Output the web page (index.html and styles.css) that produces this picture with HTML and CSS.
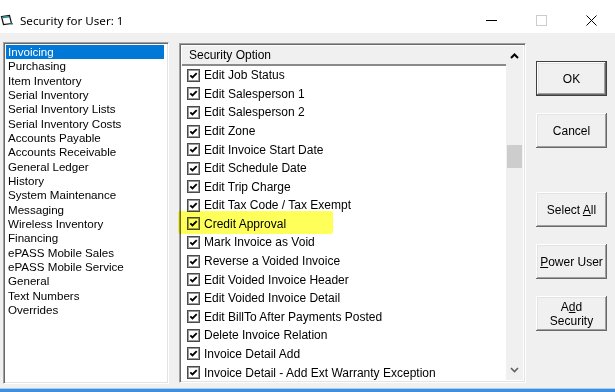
FILE: index.html
```html
<!DOCTYPE html>
<html lang="en">
<head>
    <meta charset="UTF-8">
    <meta name="viewport" content="width=device-width, initial-scale=1.0">
    <title>Security for User: 1</title>
    <link rel="stylesheet" href="styles.css">
</head>
<body>

    <!-- Title bar -->
    <div class="titlebar">
        <svg class="app-icon" width="14" height="12" viewBox="0 0 14 12">
            <path d="M1.5 2.5 L9.5 1.5 L11.5 9.5 L3.5 10.5 Z" fill="#fff" stroke="#111" stroke-width="1.2"/>
            <path d="M2.5 3.5 L9 2.8" stroke="#1b8a8a" stroke-width="1.4"/>
            <path d="M10.5 9.8 L13 9.8" stroke="#1b8a8a" stroke-width="1.4"/>
        </svg>
        <span class="title">Security for User: 1</span>
        <div class="controls">
            <span class="ctl"><svg width="11" height="11" viewBox="0 0 11 11"><path d="M0 5.5 H11" stroke="#000" stroke-width="1"/></svg></span>
            <span class="ctl"><svg width="11" height="11" viewBox="0 0 11 11"><rect x="0.5" y="0.5" width="10" height="10" fill="none" stroke="#cccccc" stroke-width="1"/></svg></span>
            <span class="ctl"><svg width="11" height="11" viewBox="0 0 11 11"><path d="M0.5 0.5 L10.5 10.5 M10.5 0.5 L0.5 10.5" stroke="#000" stroke-width="1"/></svg></span>
        </div>
    </div>

    <div class="dialog">
        <!-- Category list -->
        <ul class="categories">
            <li class="selected">Invoicing</li>
            <li>Purchasing</li>
            <li>Item Inventory</li>
            <li>Serial Inventory</li>
            <li>Serial Inventory Lists</li>
            <li>Serial Inventory Costs</li>
            <li>Accounts Payable</li>
            <li>Accounts Receivable</li>
            <li>General Ledger</li>
            <li>History</li>
            <li>System Maintenance</li>
            <li>Messaging</li>
            <li>Wireless Inventory</li>
            <li>Financing</li>
            <li>ePASS Mobile Sales</li>
            <li>ePASS Mobile Service</li>
            <li>General</li>
            <li>Text Numbers</li>
            <li>Overrides</li>
        </ul>

        <!-- Security options list -->
        <div class="options">
            <div class="options-main">
                <div class="options-header">Security Option</div>
                <ul class="option-rows" id="optionRows"></ul>
            </div>
            <div class="scrollbar">
                <div class="arrow">
                    <svg width="9" height="6" viewBox="0 0 9 6"><path d="M1 5 L4.5 1.5 L8 5" fill="none" stroke="#000" stroke-width="2"/></svg>
                </div>
                <div class="track"><div class="thumb"></div></div>
                <div class="arrow">
                    <svg width="9" height="6" viewBox="0 0 9 6"><path d="M1 1 L4.5 4.5 L8 1" fill="none" stroke="#606060" stroke-width="1.6"/></svg>
                </div>
            </div>
            <div class="highlight"></div>
        </div>

        <!-- Buttons -->
        <div class="buttons">
            <button class="btn default">OK</button>
            <button class="btn">Cancel</button>
            <button class="btn spaced">Select <u>A</u>ll</button>
            <button class="btn"><u>P</u>ower User</button>
            <button class="btn">A<u>d</u>d<br>Security</button>
        </div>
    </div>

    <div class="edge"></div>

    <script>
        // Security options ki list
        let options = [
            "Edit Job Status",
            "Edit Salesperson 1",
            "Edit Salesperson 2",
            "Edit Zone",
            "Edit Invoice Start Date",
            "Edit Schedule Date",
            "Edit Trip Charge",
            "Edit Tax Code / Tax Exempt",
            "Credit Approval",
            "Mark Invoice as Void",
            "Reverse a Voided Invoice",
            "Edit Voided Invoice Header",
            "Edit Voided Invoice Detail",
            "Edit BillTo After Payments Posted",
            "Delete Invoice Relation",
            "Invoice Detail Add",
            "Invoice Detail - Add Ext Warranty Exception"
        ];

        let rows = document.getElementById("optionRows");
        options.forEach(function (name) {
            let li = document.createElement("li");
            li.innerHTML = '<span class="check"><svg width="9" height="9" viewBox="0 0 9 9">' +
                '<path d="M1.3 4.3 L3.5 6.5 L7.7 2.1" fill="none" stroke="#000" stroke-width="1.9"/></svg></span>' +
                '<span>' + name + '</span>';
            rows.appendChild(li);
        });
    </script>

</body>
</html>
```

FILE: styles.css
```css
* {
    margin: 0;
    padding: 0;
    box-sizing: border-box;
}
body {
    width: 615px;
    height: 392px;
    overflow: hidden;
    background: #f0f0f0;
    font-family: "Liberation Sans", Arial, sans-serif;
    color: #000;
}
.titlebar {
    height: 33px;
    background: #fff;
    display: flex;
    align-items: center;
    padding-top: 7px;
}
.app-icon {
    margin-left: 0;
    margin-right: 6px;
}
.title {
    font-family: "Noto Sans", sans-serif;
    font-size: 11.6px;
    flex: 1;
}
.controls {
    display: flex;
    margin-right: -1px;
}
.ctl {
    width: 50px;
    display: flex;
    justify-content: center;
}
.dialog {
    display: flex;
    align-items: flex-start;
    padding: 9px 0 0 3px;
    height: 355px;
}
.categories,
.options {
    border: 1px solid;
    border-color: #a0a0a0 #fff #fff #a0a0a0;
    box-shadow: inset 1px 1px #696969, inset -1px -1px #e3e3e3;
    background: #fff;
    list-style: none;
}
.categories {
    width: 166px;
    height: 342px;
    padding: 2px;
    font-size: 11.6px;
}
.categories li {
    height: 14.33px;
    line-height: 14.33px;
    padding-left: 2px;
    white-space: nowrap;
}
.categories li.selected {
    background: #0078d7;
    color: #fff;
    margin-right: 2px;
}
.options {
    position: relative;
    margin-left: 10px;
    margin-top: 1px;
    width: 347px;
    height: 340px;
    padding: 2px;
    display: flex;
}
.options-main {
    flex: 1;
    overflow: hidden;
}
.options-header {
    height: 20px;
    line-height: 19px;
    padding-left: 7px;
    font-size: 12px;
    background: #f0f0f0;
    border-bottom: 2px solid #8a8a8a;
}
.option-rows {
    list-style: none;
    font-size: 12px;
}
.option-rows li {
    height: 18.58px;
    display: flex;
    align-items: center;
    padding-left: 5px;
    gap: 4px;
    white-space: nowrap;
}
.check {
    width: 13px;
    height: 13px;
    border: 1px solid #4a4a4a;
    box-shadow: inset 0 0 0 1px #9a9a9a;
    background: #fff;
    display: flex;
    align-items: center;
    justify-content: center;
}
.scrollbar {
    width: 17px;
    background: #f0f0f0;
    display: flex;
    flex-direction: column;
}
.arrow {
    height: 20px;
    display: flex;
    align-items: center;
    justify-content: center;
}
.track {
    flex: 1;
}
.thumb {
    margin: 79px 1px 0 1px;
    height: 23px;
    background: #cdcdcd;
}
.highlight {
    position: absolute;
    left: -2px;
    top: 167px;
    width: 155px;
    height: 23px;
    background: #ffff5a;
    mix-blend-mode: multiply;
    border-radius: 2px;
}
.buttons {
    margin-left: 10px;
    margin-top: 19px;
    width: 71px;
    display: flex;
    flex-direction: column;
    gap: 17px;
}
.btn {
    height: 35px;
    border: none;
    background: #f0f0f0;
    font-family: "Liberation Sans", Arial, sans-serif;
    font-size: 12px;
    line-height: 14px;
    color: #000;
    box-shadow: inset -1px -1px #696969, inset 1px 1px #fff, inset -2px -2px #a0a0a0, inset 2px 2px #e3e3e3;
}
.btn.default {
    border: 1px solid #404040;
}
.btn.spaced {
    margin-top: 27px;
}
.edge {
    height: 4px;
    margin-top: 0;
    background: linear-gradient(#a9cdee 0, #a9cdee 1px, #3f8fdd 1px);
}
```
